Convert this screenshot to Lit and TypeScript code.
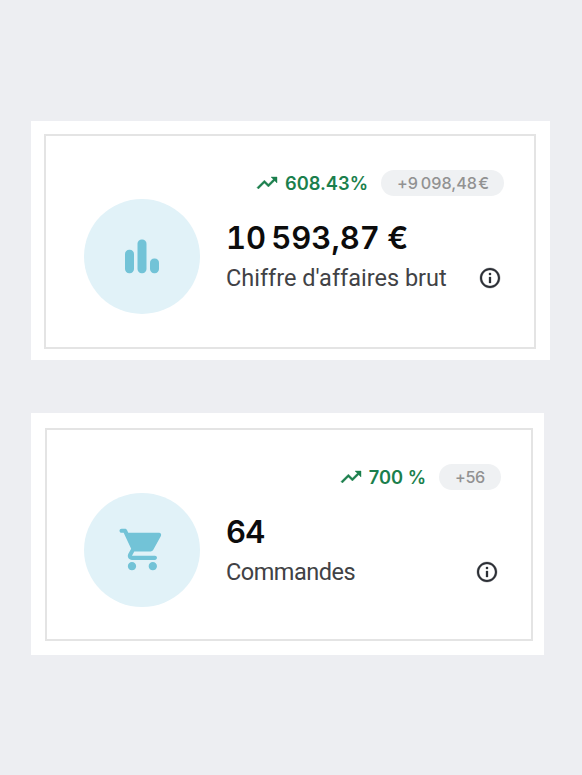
import { LitElement, html, svg, css } from "lit";
import { customElement, property } from "lit/decorators.js";

const chartIcon = svg`
  <rect x="8" y="17.8" width="9" height="23.5" rx="4.2"/>
  <rect x="20.5" y="7.5" width="9" height="33.8" rx="4.2"/>
  <rect x="33" y="26.5" width="9" height="14.8" rx="4.2"/>`;

const cartIcon = svg`
  <path transform="translate(0.4 -0.5) scale(2.0833)" d="M7 18c-1.1 0-1.99.9-1.99 2S5.9 22 7 22s2-.9 2-2-.9-2-2-2zM1 3c0 .55.45 1 1 1h1l3.6 7.59-1.35 2.44C4.52 15.37 5.48 17 7 17h11c.55 0 1-.45 1-1s-.45-1-1-1H7l1.1-2h7.45c.75 0 1.41-.41 1.75-1.03l3.58-6.49c.37-.66-.11-1.48-.87-1.48H5.21l-.67-1.43c-.16-.35-.52-.57-.9-.57H2c-.55 0-1 .45-1 1zm16 15c-1.1 0-1.99.9-1.99 2s.89 2 1.99 2 2-.9 2-2-.9-2-2-2z"/>`;

@customElement("stat-card")
export class StatCard extends LitElement {
  @property() kind = "revenue";
  @property() change = "";
  @property() diff = "";
  @property() value = "";
  @property() label = "";

  static styles = css`
    * { box-sizing: border-box; }
    :host { display: block; background: #fff; }
    .frame {
      height: 100%;
      border: 2px solid #e4e4e4;
      display: flex;
      padding: 34px 30px 0 38px;
    }
    .circle {
      flex: none;
      width: 116px;
      height: 115px;
      margin: 29px 26px 0 0;
      border-radius: 50%;
      background: #e1f2f8;
      display: flex;
      align-items: center;
      justify-content: center;
    }
    .glyph { width: 50px; height: 50px; fill: #72c3d7; }
    .info-col { flex: 1; min-width: 0; }
    .top { display: flex; height: 26px; align-items: center; justify-content: flex-end; }
    .trend { width: 24px; height: 24px; fill: #1b7f4d; stroke: #1b7f4d; stroke-width: 0.4; margin-right: 6px; }
    .change {
      font-size: 18.3px; line-height: 26px; font-weight: 600; color: #1b7f4d;
      margin-right: 13px; white-space: pre;
    }
    .badge {
      height: 26px; border-radius: 13px; padding: 0 16px; background: #eff1f3;
      color: #929292; font-size: 16.2px; line-height: 27px; font-weight: 500;
      white-space: pre; letter-spacing: -0.4px; word-spacing: -3px;
    }
    .value {
      margin-top: 20px; height: 44px; line-height: 44px; font-size: 31px;
      font-weight: 600; color: #0c0c0c; white-space: pre;
      font-variant-numeric: tabular-nums; letter-spacing: -0.8px; word-spacing: -1px;
    }
    .bottom { display: flex; align-items: center; justify-content: space-between; height: 36px; }
    .label {
      font-family: Roboto, sans-serif; font-size: 23.5px; line-height: 36px;
      color: #414245; white-space: pre;
    }
    .info { width: 24px; height: 24px; fill: #2d3036; stroke: #2d3036; stroke-width: 0.3; margin-right: 2px; }
    .revenue .badge { width: 123px; }
    .orders { padding: 34px 30px 0 37px; }
    .orders .circle { height: 114px; }
    .orders .badge { width: 62px; }
    .orders .label { letter-spacing: -0.5px; }
  `;

  render() {
    return html`
      <div class="frame ${this.kind}">
        <div class="circle">
          <svg class="glyph" viewBox="0 0 50 50">${this.kind === "orders" ? cartIcon : chartIcon}</svg>
        </div>
        <div class="info-col">
          <div class="top">
            <svg class="trend" viewBox="0 0 24 24"><path d="M16 6l2.29 2.29-4.88 4.88-4-4L2 16.59 3.41 18l6-6 4 4 6.3-6.29L22 12V6z"/></svg>
            <span class="change">${this.change}</span>
            <span class="badge">${this.diff}</span>
          </div>
          <div class="value">${this.value}</div>
          <div class="bottom">
            <span class="label">${this.label}</span>
            <svg class="info" viewBox="0 0 24 24"><path d="M11 7h2v2h-2zm0 4h2v6h-2zm1-9C6.48 2 2 6.48 2 12s4.48 10 10 10 10-4.48 10-10S17.52 2 12 2zm0 18c-4.41 0-8-3.59-8-8s3.59-8 8-8 8 3.59 8 8-3.59 8-8 8z"/></svg>
          </div>
        </div>
      </div>`;
  }
}

@customElement("app-root")
export class AppRoot extends LitElement {
  static styles = css`
    :host {
      display: flex;
      flex-direction: column;
      align-items: flex-start;
      gap: 53px;
      box-sizing: border-box;
      height: 775px;
      padding: 121px 0 0 31px;
      background: #edeef2;
      font-family: Inter, sans-serif;
    }
    stat-card { box-sizing: border-box; }
    .first { width: 519px; height: 239px; padding: 13px 14px 11px 13px; }
    .second { width: 513px; height: 242px; padding: 15px 11px 14px 14px; }
  `;

  render() {
    return html`
      <stat-card class="first" kind="revenue" change="608.43%" diff=${"+9\u202f098,48 €"}
        value=${"10\u202f593,87 €"} label="Chiffre d'affaires brut"></stat-card>
      <stat-card class="second" kind="orders" change="700 %" diff="+56"
        value="64" label="Commandes"></stat-card>`;
  }
}
